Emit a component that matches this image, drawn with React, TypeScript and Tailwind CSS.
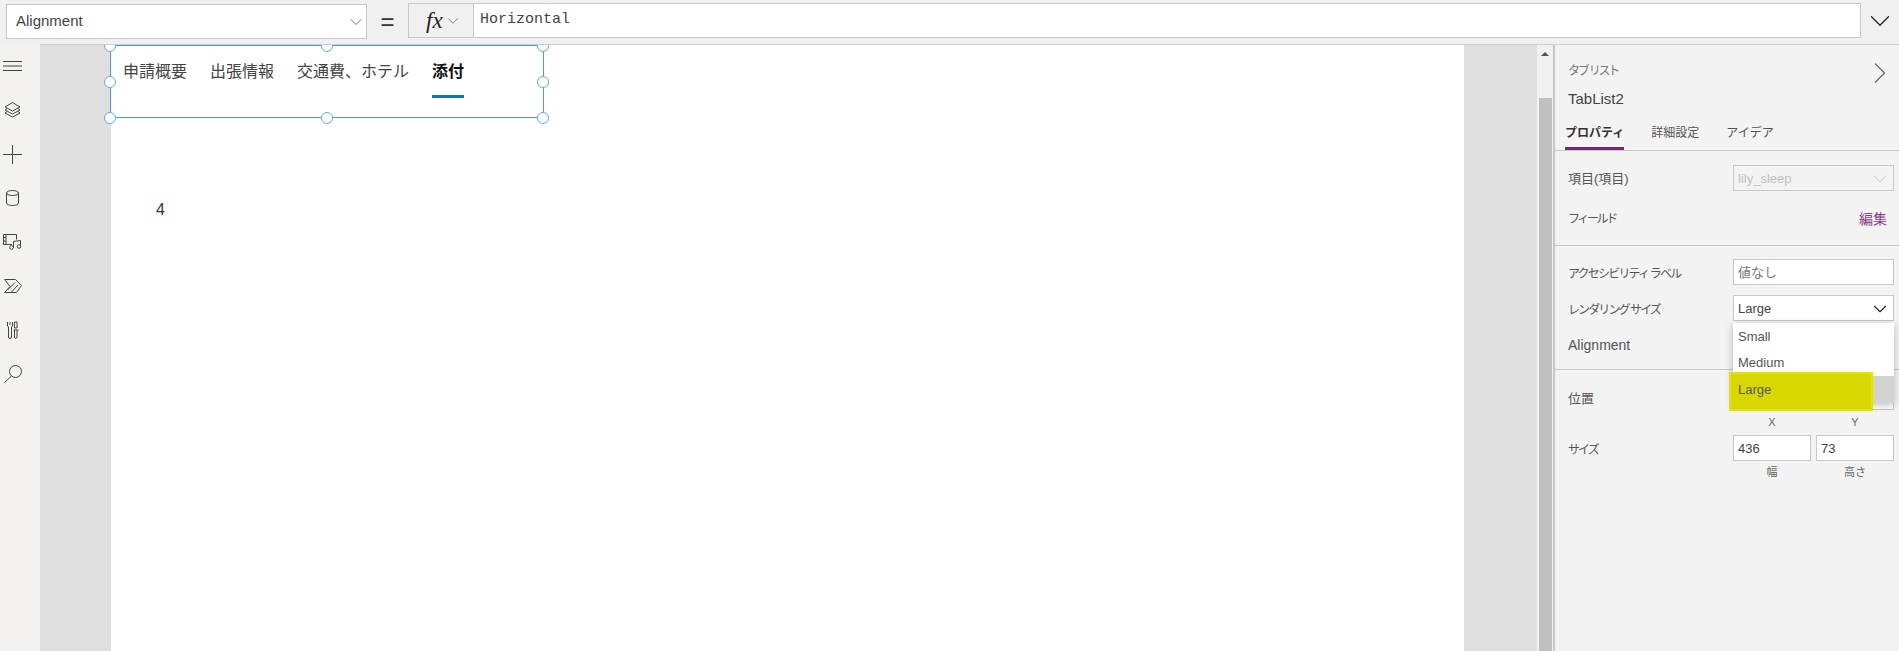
import { ChevronDown, ChevronRight } from 'lucide-react';

const jpFont = "font-['Liberation_Sans','Noto_Sans_CJK_JP',sans-serif]";

function RailIcon({ children }: { children: React.ReactNode }) {
  return <div className="w-[25px] h-[44px] flex items-center justify-center text-[#444]">{children}</div>;
}

function Handle({ className }: { className: string }) {
  return <div className={`absolute w-[12px] h-[12px] rounded-full bg-white border-[1.5px] border-[#62a9e6] ${className}`} />;
}

function Row({ label, children, className, labelClass }: { label: string; children?: React.ReactNode; className?: string; labelClass?: string }) {
  return (
    <div className={`flex items-center justify-between pl-[13px] pr-[5px] ${className ?? ''}`}>
      <span className={`whitespace-nowrap text-[#555] ${labelClass ?? 'text-[12px]'}`}>{label}</span>
      {children}
    </div>
  );
}

function Field({ value, className }: { value?: string; className?: string }) {
  return (
    <div className={`h-[26px] pt-px bg-white border border-[#c8c8c8] flex items-center px-[4px] text-[13px] text-[#444] ${className ?? ''}`}>
      {value}
    </div>
  );
}

export default function App() {
  return (
    <div className={`w-[1899px] h-[651px] flex flex-col overflow-hidden bg-white ${jpFont}`}>
      {/* Formula bar */}
      <div className="h-[45px] shrink-0 bg-[#f0f0f0] border-b border-[#d0d0d0] flex items-start pl-[6px]">
        <div className="w-[361px] h-[35px] mt-[4px] bg-white border border-[#c8c8c8] flex items-center justify-between pl-[9px] text-[15px] text-[#444]">
          <span>Alignment</span>
          <ChevronDown className="w-[20px] h-[20px] text-[#555]" strokeWidth={1} />
        </div>
        <div className="w-[41px] h-[44px] flex items-center justify-center text-[24px] leading-none text-[#333]">=</div>
        <div className="w-[66px] h-[35px] mt-[3px] bg-[#f0f0f0] border border-[#c8c8c8] flex items-center pl-[17px] gap-[5px] text-[#222]">
          <span className="font-['Liberation_Serif',serif] italic text-[23px] leading-none">fx</span>
          <ChevronDown className="w-[18px] h-[18px] text-[#555] -ml-[4px]" strokeWidth={1} />
        </div>
        <div className="w-[1387px] h-[35px] mt-[3px] bg-white border border-l-0 border-[#c8c8c8] flex items-center pl-[6px] font-['Liberation_Mono',monospace] text-[15px] text-[#444]">
          Horizontal
        </div>
        <div className="flex-1 h-[41px] flex items-center justify-center">
          <ChevronDown className="w-[34px] h-[34px] text-[#222]" strokeWidth={0.9} />
        </div>
      </div>

      <div className="flex-1 flex min-h-0">
        {/* Left rail */}
        <div className="w-[40px] shrink-0 bg-[#f3f2f1] -mt-px">
          <RailIcon>
            <svg width="19" height="10" viewBox="0 0 19 10" stroke="currentColor">
              <path d="M0 .5h19M0 5h19M0 9.500h19" />
            </svg>
          </RailIcon>
          <RailIcon>
            <svg width="17" height="16" viewBox="0 0 17 16" fill="none" stroke="currentColor">
              <path d="M8.500.5 16 5l-7.500 4L1 5z" />
              <path d="M3 6.500 1 8l7.500 4L16 8l-2-1.500" />
              <path d="M3 9.500 1 11l7.500 4 7.500-4-2-1.500" />
            </svg>
          </RailIcon>
          <RailIcon>
            <svg width="19" height="19" viewBox="0 0 19 19" stroke="currentColor">
              <path d="M0 9.500h19M9.500 0v19" />
            </svg>
          </RailIcon>
          <RailIcon>
            <svg width="13" height="16" viewBox="0 0 13 16" fill="none" stroke="currentColor">
              <path d="M.5 3v10c0 3.300 12 3.300 12 0V3" />
              <ellipse cx="6.500" cy="3" rx="6" ry="2.500" />
            </svg>
          </RailIcon>
          <RailIcon>
            <svg width="19" height="16" viewBox="0 0 19 16" fill="none" stroke="currentColor">
              <path d="M9 10.500H.5V.5h13v5" />
              <path d="M3 .5v10" />
              <path d="M.5 3.500H3M.5 7H3" />
              <circle cx="8.500" cy="13.500" r="1.800" />
              <circle cx="16" cy="12.500" r="1.800" />
              <path d="M10.500 13.500V7.500l7-1v6" />
            </svg>
          </RailIcon>
          <RailIcon>
            <svg width="18" height="14" viewBox="0 0 18 14" fill="none" stroke="currentColor">
              <path d="M.5.500h11l6 6-5 7H.5l5.500-6z" />
              <path d="M3.500 11 11 3.500M7 13.500l7-7.500" />
            </svg>
          </RailIcon>
          <RailIcon>
            <svg width="12" height="18" viewBox="0 0 12 18" fill="none" stroke="currentColor">
              <path d="M.5 1v4l1 1v10a1 1 0 0 0 3 0V6l1-1V1" />
              <path d="M3 1v3" />
              <path d="M7.500 1h2.500v6H7.500zM6.500 9h5M7.500 9v7a1.200 1.200 0 0 0 2.500 0V9" />
            </svg>
          </RailIcon>
          <RailIcon>
            <svg width="18" height="18" viewBox="0 0 18 18" fill="none" stroke="currentColor">
              <circle cx="11.500" cy="6.500" r="6" />
              <path d="M7.500 11 .5 17.500" />
            </svg>
          </RailIcon>
        </div>

        {/* Canvas */}
        <div className="flex-1 bg-[#dfdfdf] pl-[71px] pr-[73px] overflow-hidden">
          <div className="h-full bg-white">
            <div className="relative w-[434px] h-[73px] -ml-px border-[1.5px] border-t border-[#4a9ad8] flex items-start pl-[12px] pt-[14px] gap-[23px] text-[16px] leading-[24px] text-[#444]">
              <span>申請概要</span>
              <span>出張情報</span>
              <span>交通費、ホテル</span>
              <span className="relative font-bold text-[#111]">
                添付
                <span className="absolute left-0 right-0 top-[35px] h-[3px] bg-[#1b6fc2]" />
              </span>
              <Handle className="left-[-7px] top-[-6px]" />
              <Handle className="left-[210px] top-[-6px]" />
              <Handle className="right-[-6px] top-[-6px]" />
              <Handle className="left-[-7px] top-[30px]" />
              <Handle className="right-[-6px] top-[30px]" />
              <Handle className="left-[-7px] bottom-[-7px]" />
              <Handle className="left-[210px] bottom-[-7px]" />
              <Handle className="right-[-6px] bottom-[-7px]" />
            </div>
            <div className="ml-[45px] mt-[83px] text-[16px] leading-[18px] text-[#333]">4</div>
          </div>
        </div>

        {/* Scrollbar */}
        <div className="w-[16px] shrink-0 bg-[#f0f0f0] flex flex-col">
          <div className="h-[53px] flex justify-center pt-[7px]">
            <div className="w-0 h-0 border-x-[4px] border-x-transparent border-b-[4px] border-b-[#505050]" />
          </div>
          <div className="flex-1 ml-[2px] mr-[1px] bg-[#c0c0c0]" />
        </div>

        {/* Properties panel */}
        <div className="w-[346px] shrink-0 bg-[#f3f3f3] border-l-2 border-l-[#c8c8c8]">
          <div className="relative pl-[13px] pt-[18px]">
            <div className="text-[12px] leading-[16px] tracking-[-2.2px] text-[#777]">タブ リスト</div>
            <div className="mt-[10px] text-[15px] leading-[20px] text-[#444]">TabList2</div>
            <ChevronRight className="absolute right-[1px] top-[10px] w-[36px] h-[36px] text-[#666]" strokeWidth={0.8} />
          </div>
          <div className="flex gap-[27px] pl-[10px] mt-[12px] h-[30px] border-b border-[#c8c8c8] text-[12px] leading-[16px] text-[#555]">
            <span className="h-[29px] pt-[4px] font-bold text-[#333] border-b-[3px] border-[#742774]">プロパティ</span>
            <span className="pt-[4px]">詳細設定</span>
            <span className="pt-[4px]">アイデア</span>
          </div>
          <Row label="項目(項目)" className="mt-[14px]" labelClass="text-[13px] pt-px">
            <div className="w-[161px] h-[26px] pt-px border border-[#c8c8c8] flex items-center justify-between pl-[4px] pr-[1px] text-[13px] text-[#c0c0c0]">
              lily_sleep
              <ChevronDown className="w-[24px] h-[24px]" strokeWidth={0.8} />
            </div>
          </Row>
          <Row label="フィールド" className="mt-[18px] h-[20px]" labelClass="text-[12px] tracking-[-2.4px]">
            <span className="text-[14px] text-[#8a3f8a] mr-[7px]">編集</span>
          </Row>
          <div className="border-b border-[#c8c8c8] mt-[16px]" />
          <Row label="アクセシビリティ ラベル" className="mt-[13px]" labelClass="text-[12px] tracking-[-1.8px] pt-[4px]">
            <Field value="値なし" className="w-[161px] text-[#777]" />
          </Row>
          <Row label="レンダリング サイズ" className="mt-[10px]" labelClass="text-[12px] tracking-[-1.9px] pt-[3px]">
            <div className="w-[161px] h-[26px] pt-px bg-white border border-[#c8c8c8] flex items-center justify-between pl-[4px] pr-[2px] text-[13px] text-[#444]">
              Large
              <ChevronDown className="w-[22px] h-[22px] text-[#222]" strokeWidth={1.2} />
            </div>
          </Row>
          <div className="relative pt-[12px]">
            <Row label="Alignment" className="h-[24px]" labelClass="text-[14px]" />
            <div className="border-b border-[#c8c8c8] mt-[12px]" />
            <Row label="位置" className="mt-[14px]" labelClass="text-[13px] pt-[3px]">
              <div className="flex gap-[5px]">
                <Field className="w-[78px]" />
                <Field className="w-[78px]" />
              </div>
            </Row>
            <div className="flex justify-end gap-[5px] pr-[5px] mt-[5px] text-[11px] leading-[14px] text-[#666]">
              <span className="w-[78px] text-center">X</span>
              <span className="w-[78px] text-center">Y</span>
            </div>
            <Row label="サイズ" className="mt-[6px]" labelClass="text-[12px] tracking-[-2px] pt-[4px]">
              <div className="flex gap-[5px]">
                <Field value="436" className="w-[78px]" />
                <Field value="73" className="w-[78px]" />
              </div>
            </Row>
            <div className="flex justify-end gap-[5px] pr-[5px] mt-[4px] text-[11px] leading-[14px] text-[#666]">
              <span className="w-[78px] text-center">幅</span>
              <span className="w-[78px] text-center">高さ</span>
            </div>
            {/* Open dropdown menu */}
            <div className="absolute right-[5px] top-[2px] w-[161px] h-[80px] bg-white shadow-[0_2px_8px_rgba(0,0,0,0.25)] text-[13px] text-[#555] pt-px">
              <div className="h-[26px] flex items-center px-[5px]">Small</div>
              <div className="h-[26px] flex items-center px-[5px]">Medium</div>
              <div className="h-[27px] flex items-center px-[5px] bg-[#d2d2d2]" />
            </div>
            {/* Yellow highlighter, with the item text above it */}
            <div className="absolute right-[26px] top-[51px] w-[144px] h-[39px] bg-[#d8d800] border-2 border-[#e4e400]" />
            <div className="absolute left-[183px] top-[55px] h-[27px] flex items-center text-[13px] text-[#555]">Large</div>
          </div>
        </div>
      </div>
    </div>
  );
}
